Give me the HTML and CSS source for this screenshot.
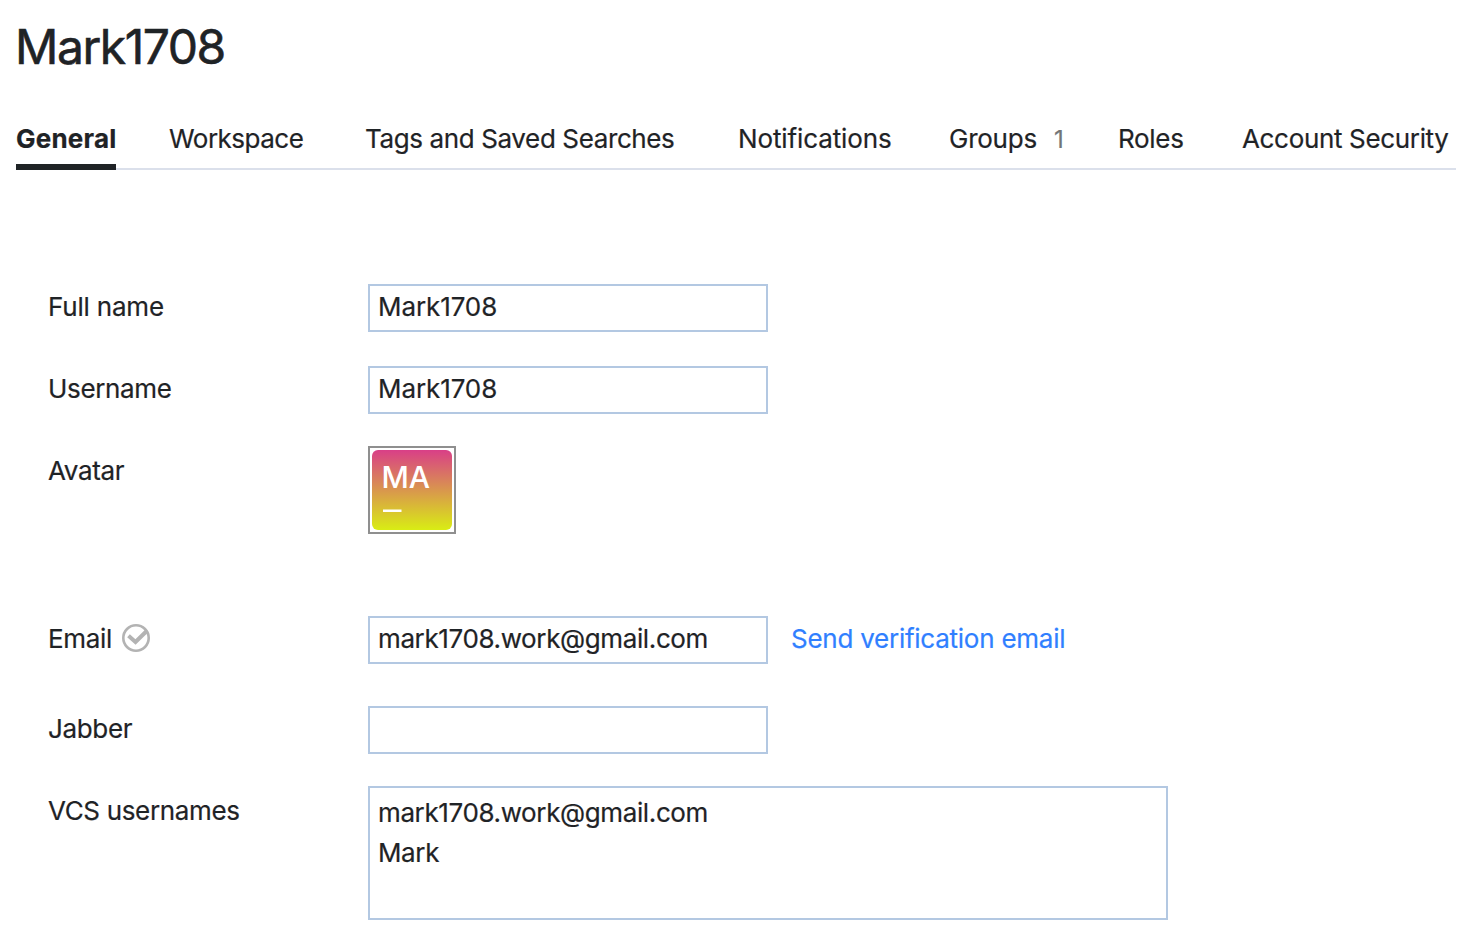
FILE: index.html
```html
<!DOCTYPE html>
<html lang="en">
<head>
<meta charset="utf-8">
<title>Mark1708</title>
<link rel="stylesheet" href="styles.css">
</head>
<body>
<main class="page">
  <h1 class="title">Mark1708</h1>
  <nav class="tabs">
    <a class="tab tab-general active">General</a>
    <a class="tab tab-workspace">Workspace</a>
    <a class="tab tab-tags">Tags and Saved Searches</a>
    <a class="tab tab-notifications">Notifications</a>
    <a class="tab tab-groups">Groups<span class="count">1</span></a>
    <a class="tab tab-roles">Roles</a>
    <a class="tab tab-security">Account Security</a>
  </nav>
  <form class="form">
    <div class="row row-name"><label class="label">Full name</label><div class="field">Mark1708</div></div>
    <div class="row row-user"><label class="label">Username</label><div class="field">Mark1708</div></div>
    <div class="row row-avatar"><label class="label">Avatar</label>
      <div class="avatar">
        <svg width="80" height="80" viewBox="0 0 80 80">
          <defs><linearGradient id="g" x1="0" y1="0" x2="0" y2="1"><stop offset="0" stop-color="#d93f87"/><stop offset="1" stop-color="#d9ed14"/></linearGradient></defs>
          <rect width="80" height="80" rx="6" fill="url(#g)"/>
          <text class="initials" x="9.5" y="38" textLength="48.5">MA</text>
          <rect x="11" y="59.5" width="18.5" height="2.5" fill="#fff"/>
        </svg>
      </div>
    </div>
    <div class="row row-email"><label class="label">Email
      <svg class="check" width="28" height="28" viewBox="0 0 28 28" fill="none" stroke="#b3b3b3"><circle cx="14" cy="14" r="12.7" stroke-width="2.6"/><path d="M6.5 11.8l7 6.2L25.2 6.5" stroke-width="4"/></svg></label>
      <div class="field email">mark1708.work@gmail.com</div><a class="link">Send verification email</a></div>
    <div class="row row-jabber"><label class="label">Jabber</label><div class="field"></div></div>
    <div class="row row-vcs"><label class="label">VCS usernames</label><div class="area">mark1708.work@gmail.com<br>Mark</div></div>
  </form>
</main>
</body>
</html>
```
FILE: styles.css
```css
* { box-sizing: border-box; }
body { margin: 0; background: #fff; color: #1f2326; font: 400 26px/40px Inter, sans-serif; -webkit-text-stroke: 0.2px; }
.page { width: 1484px; height: 948px; padding: 16px 28px 0 16px; overflow: hidden; }
.title { margin: 0 0 0 -1px; height: 104px; font-size: 48px; line-height: 62px; font-weight: 400; letter-spacing: -1.45px; -webkit-text-stroke: 0.6px; }
.tabs { display: flex; height: 50px; border-bottom: 2px solid #dbe0eb; white-space: nowrap; }
.tab { height: 50px; line-height: 38px; letter-spacing: -0.3px; }
.active { width: 100px; font-weight: 700; letter-spacing: 0.2px; border-bottom: 6px solid #1f2326; }
.tab-workspace { margin-left: 53px; width: 136px; letter-spacing: -0.5px; }
.tab-tags { margin-left: 60px; width: 310px; letter-spacing: -0.38px; }
.tab-notifications { margin-left: 63px; width: 154px; letter-spacing: -0.12px; }
.tab-groups { margin-left: 57px; width: 118px; letter-spacing: -0.25px; }
.tab-roles { margin-left: 51px; width: 68px; }
.tab-security { margin-left: 56px; letter-spacing: -0.34px; }
.count { margin-left: 17px; font-size: 24px; color: #737577; }
.form { padding: 114px 0 0 32px; }
.row { display: flex; align-items: flex-start; white-space: nowrap; }
.row-name { height: 82px; }
.row-user { height: 80px; }
.row-avatar { height: 170px; }
.row-email { height: 90px; }
.row-jabber { height: 80px; }
.label { display: flex; align-items: center; width: 320px; height: 48px; padding-bottom: 2px; letter-spacing: -0.34px; }
.row-name .label { letter-spacing: -0.2px; }
.row-avatar .label, .row-vcs .label { height: 52px; }
.check { margin: -2px 0 0 10px; }
.field { width: 400px; height: 48px; border: 2px solid #b3c8e2; padding: 0 8px; line-height: 42px; letter-spacing: -0.1px; }
.email { letter-spacing: -0.38px; }
.area { width: 800px; height: 134px; border: 2px solid #b3c8e2; padding: 5px 8px; line-height: 40px; letter-spacing: -0.38px; }
.avatar { width: 88px; height: 88px; border: 2px solid #8f8f8f; padding: 2px; }
.avatar svg { display: block; }
.initials { font: 500 30px Inter, sans-serif; fill: #fff; }
.link { margin-left: 23px; line-height: 46px; color: #307fff; letter-spacing: -0.25px; }
```
